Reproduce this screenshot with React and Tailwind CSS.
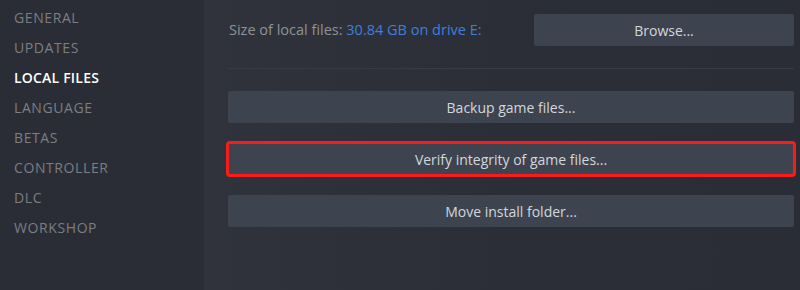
import React from "react";

const tabs = ["General", "Updates", "Local Files", "Language", "Betas", "Controller", "DLC", "Workshop"];

function ActionButton({ label, highlight }) {
  return (
    <button
      className={
        "h-8 w-full rounded-[2px] bg-[#3d4450] text-[14px] text-[#d3d6db] " +
        (highlight ? "outline-[3px] outline-offset-[-1px] outline-[#fa1b1b] outline" : "")
      }
    >
      {label}
    </button>
  );
}

export default function App() {
  return (
    <div
      className="flex h-[290px] w-[800px] overflow-hidden bg-[#2b2e36]"
      style={{ fontFamily: '"Open Sans", "Liberation Sans", sans-serif' }}
    >
      {/* sidebar */}
      <div className="flex w-[204px] shrink-0 flex-col bg-[#2a2d35] pl-[14px] pt-[2px]">
        {tabs.map((t) => (
          <div
            key={t}
            className={
              "flex h-[30px] items-center text-[14px] uppercase " +
              (t === "Local Files" ? "font-semibold tracking-[0.2px] text-white" : "tracking-[0.6px] text-[#7b7e84]")
            }
          >
            {t}
          </div>
        ))}
      </div>

      {/* content */}
      <div className="flex flex-1 flex-col bg-gradient-to-r from-[#30333c] via-[#2b2e36] to-[#2a2d35] px-[6px] pl-[24px]">
        <div className="flex items-center pt-[14px]">
          <div className="flex-1 pl-[1px] text-[14.5px] text-[#8f9298]">
            Size of local files: <span className="text-[#3f7fdc]">30.84 GB on drive E:</span>
          </div>
          <button className="h-8 w-[260px] rounded-[2px] bg-[#3d4450] text-[14px] text-[#d3d6db]">
            Browse...
          </button>
        </div>
        <div className="mt-[22px] h-px bg-[#383b44]" />
        <div className="mt-[22px] flex flex-col gap-5">
          <ActionButton label="Backup game files..." />
          <ActionButton label="Verify integrity of game files..." highlight />
          <ActionButton label="Move install folder..." />
        </div>
      </div>
    </div>
  );
}
